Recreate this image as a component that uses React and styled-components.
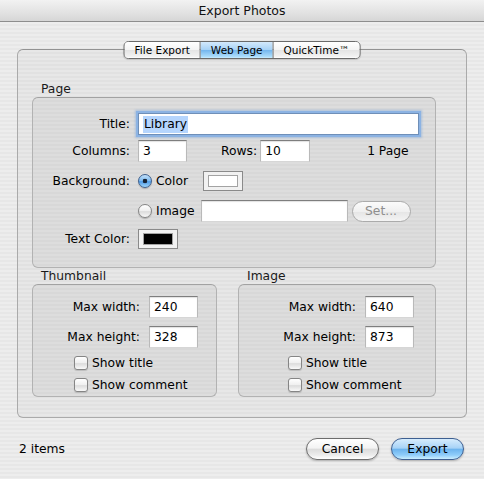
import React from 'react';
import styled, {createGlobalStyle} from 'styled-components';

const Global = createGlobalStyle`
  html, body {
    margin: 0;
    padding: 0;
    background: #e9e9e9;
  }
  body {
    font-family: "DejaVu Sans", "Lucida Grande", sans-serif;
    font-size: 12.3px;
    color: #000;
  }
  * { box-sizing: border-box; }
`;

const Window = styled.div`
  width: 484px;
  height: 479px;
  display: flex;
  flex-direction: column;
  overflow: hidden;
`;

const TitleBar = styled.div`
  height: 22px;
  flex: none;
  display: flex;
  align-items: center;
  justify-content: center;
  font-size: 12.5px;
  color: #111;
  border-bottom: 1px solid #8d8d8d;
  background: linear-gradient(#f2f2f2, #e2e2e2 60%, #d6d6d6);
`;

const Body = styled.div`
  flex: 1;
  padding: 27px 17px 0 17px;
  background: repeating-linear-gradient(to bottom, #ededed 0, #ededed 2px, #e7e7e7 2px, #e7e7e7 4px);
`;

const TabBox = styled.div`
  position: relative;
  border: 1px solid #aaaaaa;
  border-top-color: #939393;
  border-radius: 6px;
  background: rgba(0, 0, 0, 0.025);
  padding: 31px 30px 20px 14px;
`;

const Segments = styled.div`
  position: absolute;
  top: -9px;
  left: 50%;
  transform: translateX(-50%);
  display: flex;
  height: 18px;
  border: 1px solid #6a6a6a;
  border-radius: 5px;
  overflow: hidden;
  box-shadow: 0 1px 1px rgba(0, 0, 0, 0.15);
`;

const Segment = styled.div`
  padding: 0 10px;
  font-size: 10.5px;
  line-height: 16px;
  white-space: nowrap;
  border-left: ${p => (p.$first ? 'none' : '1px solid #7d7d7d')};
  background: ${p => (p.$selected
    ? 'linear-gradient(#d3e9fc, #a7d2f6 48%, #74b6ee 52%, #a9dbfb 90%, #c9ecff)'
    : 'linear-gradient(#ffffff, #f4f4f4 48%, #e4e4e4 52%, #f2f2f2 90%, #ffffff)')};
`;

const SectionLabel = styled.div`
  height: 16px;
  line-height: 16px;
  padding-left: 9px;
  color: #1a1a1a;
`;

const GroupBox = styled.div`
  width: ${p => p.$w}px;
  border: 1px solid #b2b2b2;
  border-top-color: #a2a2a2;
  border-radius: 6px;
  background: rgba(0, 0, 0, 0.04);
  padding: ${p => p.$pad};
`;

const PageBody = styled.div`
  display: flex;
  flex-direction: column;
`;

const FormRow = styled.div`
  display: grid;
  grid-template-columns: 97px 1fr;
  column-gap: 8px;
  height: 22px;
  align-items: center;
  margin-top: ${p => p.$mt || 0}px;
`;

const Label = styled.div`
  text-align: right;
  white-space: nowrap;
`;

const Inline = styled.div`
  display: flex;
  align-items: center;
  height: 22px;
`;

const TextField = styled.div`
  width: ${p => p.$w}px;
  height: 22px;
  margin-left: ${p => p.$ml || 0}px;
  background: #fff;
  border: 1px solid #b9b9b9;
  border-top-color: #7e7e7e;
  border-bottom-color: #d6d6d6;
  box-shadow: inset 0 1px 1px rgba(0, 0, 0, 0.12);
  padding-left: 4px;
  line-height: 20px;
  white-space: nowrap;
  ${p => p.$focus && `
    box-shadow: 0 0 0 2px #8cb3e3, 0 0 2px 3px rgba(110, 160, 220, 0.45);
    border-color: #6f8fb8;
  `}
`;

const Selected = styled.span`
  background: #b5d5fd;
  padding: 1px 1px 2px 1px;
`;

const TextLabel = styled.span`
  margin-left: ${p => p.$ml || 0}px;
  white-space: nowrap;
`;

const Radio = styled.span`
  flex: none;
  width: 14px;
  height: 14px;
  border-radius: 50%;
  border: 1px solid ${p => (p.$checked ? '#3f5f8c' : '#858585')};
  box-shadow: 0 1px 1px rgba(0, 0, 0, 0.2);
  background: ${p => (p.$checked
    ? 'radial-gradient(circle at 50% 50%, #172436 0, #172436 2px, transparent 2.6px), linear-gradient(#c3e1fa, #7ab8ef 50%, #4f9be6 55%, #9fd6fb)'
    : 'linear-gradient(#ffffff, #efefef 50%, #dcdcdc 55%, #f9f9f9)')};
`;

const Check = styled.span`
  flex: none;
  width: 14px;
  height: 14px;
  border-radius: 3px;
  border: 1px solid #858585;
  box-shadow: 0 1px 1px rgba(0, 0, 0, 0.15);
  background: linear-gradient(#ffffff, #efefef 50%, #dcdcdc 55%, #f9f9f9);
`;

const Well = styled.div`
  width: ${p => p.$w}px;
  height: 20px;
  margin-left: ${p => p.$ml || 0}px;
  border: 1px solid #8a8a8a;
  background: #f1f1f1;
  padding: 3px 4px;
  display: flex;
`;

const Swatch = styled.div`
  flex: 1;
  border: 1px solid #a3a3a3;
  background: ${p => p.$color};
`;

const PillButton = styled.div`
  width: ${p => p.$w}px;
  height: ${p => p.$h || 22}px;
  margin-left: ${p => p.$ml || 0}px;
  border-radius: 11px;
  display: flex;
  align-items: center;
  justify-content: center;
  white-space: nowrap;
  color: ${p => (p.$disabled ? '#8e8e8e' : '#000')};
  border: 1px solid ${p => (p.$primary ? '#3e5f91' : p.$disabled ? '#ababab' : '#6d6d6d')};
  box-shadow: ${p => (p.$disabled ? 'none' : '0 1px 2px rgba(0, 0, 0, 0.25)')};
  background: ${p => (p.$primary
    ? 'linear-gradient(#d6ecfd, #a8d3f7 45%, #6db4ee 52%, #8fcdfa 80%, #cbefff)'
    : p.$disabled
      ? 'linear-gradient(#fbfbfb, #f0f0f0 50%, #e6e6e6 55%, #f4f4f4)'
      : 'linear-gradient(#ffffff, #f3f3f3 45%, #dcdcdc 52%, #ececec 80%, #ffffff)')};
`;

const Columns = styled.div`
  display: flex;
  gap: 21px;
`;

const SmallGrid = styled.div`
  display: grid;
  grid-template-columns: ${p => p.$labelW}px 49px;
  column-gap: 9px;
  row-gap: 8px;
  align-items: center;
`;

const CheckRow = styled.div`
  display: flex;
  align-items: center;
  gap: 4px;
  height: 22px;
  padding-left: ${p => p.$indent}px;
  margin-top: ${p => p.$mt || 0}px;
`;

const Footer = styled.div`
  display: flex;
  align-items: center;
  margin-top: 20px;
  padding: 0 3px 0 2px;
`;

const Status = styled.div`
  flex: 1;
`;

const SizeGroup = ({title, w, labelW, indent, width, height}) => (
    <div>
        <SectionLabel>{title}</SectionLabel>
        <GroupBox $w={w} $pad="11px 0 0 0">
            <SmallGrid $labelW={labelW}>
                <Label>Max width:</Label>
                <TextField $w={49}>{width}</TextField>
                <Label>Max height:</Label>
                <TextField $w={49}>{height}</TextField>
            </SmallGrid>
            <CheckRow $indent={indent} $mt={4}><Check/>Show title</CheckRow>
            <CheckRow $indent={indent}><Check/>Show comment</CheckRow>
        </GroupBox>
    </div>
);

const App = () => {
    return (<Window>
        <Global/>
        <TitleBar>Export Photos</TitleBar>
        <Body>
            <TabBox>
                <Segments>
                    <Segment $first>File Export</Segment>
                    <Segment $selected>Web Page</Segment>
                    <Segment>QuickTime™</Segment>
                </Segments>

                <SectionLabel>Page</SectionLabel>
                <GroupBox $w={404} $pad="15px 0 17px 0">
                    <PageBody>
                        <FormRow>
                            <Label>Title:</Label>
                            <TextField $w={281} $focus><Selected>Library</Selected></TextField>
                        </FormRow>
                        <FormRow $mt={5}>
                            <Label>Columns:</Label>
                            <Inline>
                                <TextField $w={49}>3</TextField>
                                <TextLabel $ml={34}>Rows:</TextLabel>
                                <TextField $w={50} $ml={3}>10</TextField>
                                <TextLabel $ml={57}>1 Page</TextLabel>
                            </Inline>
                        </FormRow>
                        <FormRow $mt={8}>
                            <Label>Background:</Label>
                            <Inline>
                                <Radio $checked/>
                                <TextLabel $ml={4}>Color</TextLabel>
                                <Well $w={40} $ml={15}><Swatch $color="#ffffff"/></Well>
                            </Inline>
                        </FormRow>
                        <FormRow $mt={8}>
                            <span/>
                            <Inline>
                                <Radio/>
                                <TextLabel $ml={4}>Image</TextLabel>
                                <TextField $w={147} $ml={6}/>
                                <PillButton $w={59} $h={21} $ml={4} $disabled>Set...</PillButton>
                            </Inline>
                        </FormRow>
                        <FormRow $mt={6}>
                            <Label>Text Color:</Label>
                            <Inline>
                                <Well $w={40}><Swatch $color="#000000"/></Well>
                            </Inline>
                        </FormRow>
                    </PageBody>
                </GroupBox>

                <Columns>
                    <SizeGroup title="Thumbnail" w={185} labelW={107} indent={41} width="240" height="328"/>
                    <SizeGroup title="Image" w={198} labelW={117} indent={49} width="640" height="873"/>
                </Columns>
            </TabBox>

            <Footer>
                <Status>2 items</Status>
                <PillButton $w={73}>Cancel</PillButton>
                <PillButton $w={73} $ml={12} $primary>Export</PillButton>
            </Footer>
        </Body>
    </Window>);
};

export default App;
